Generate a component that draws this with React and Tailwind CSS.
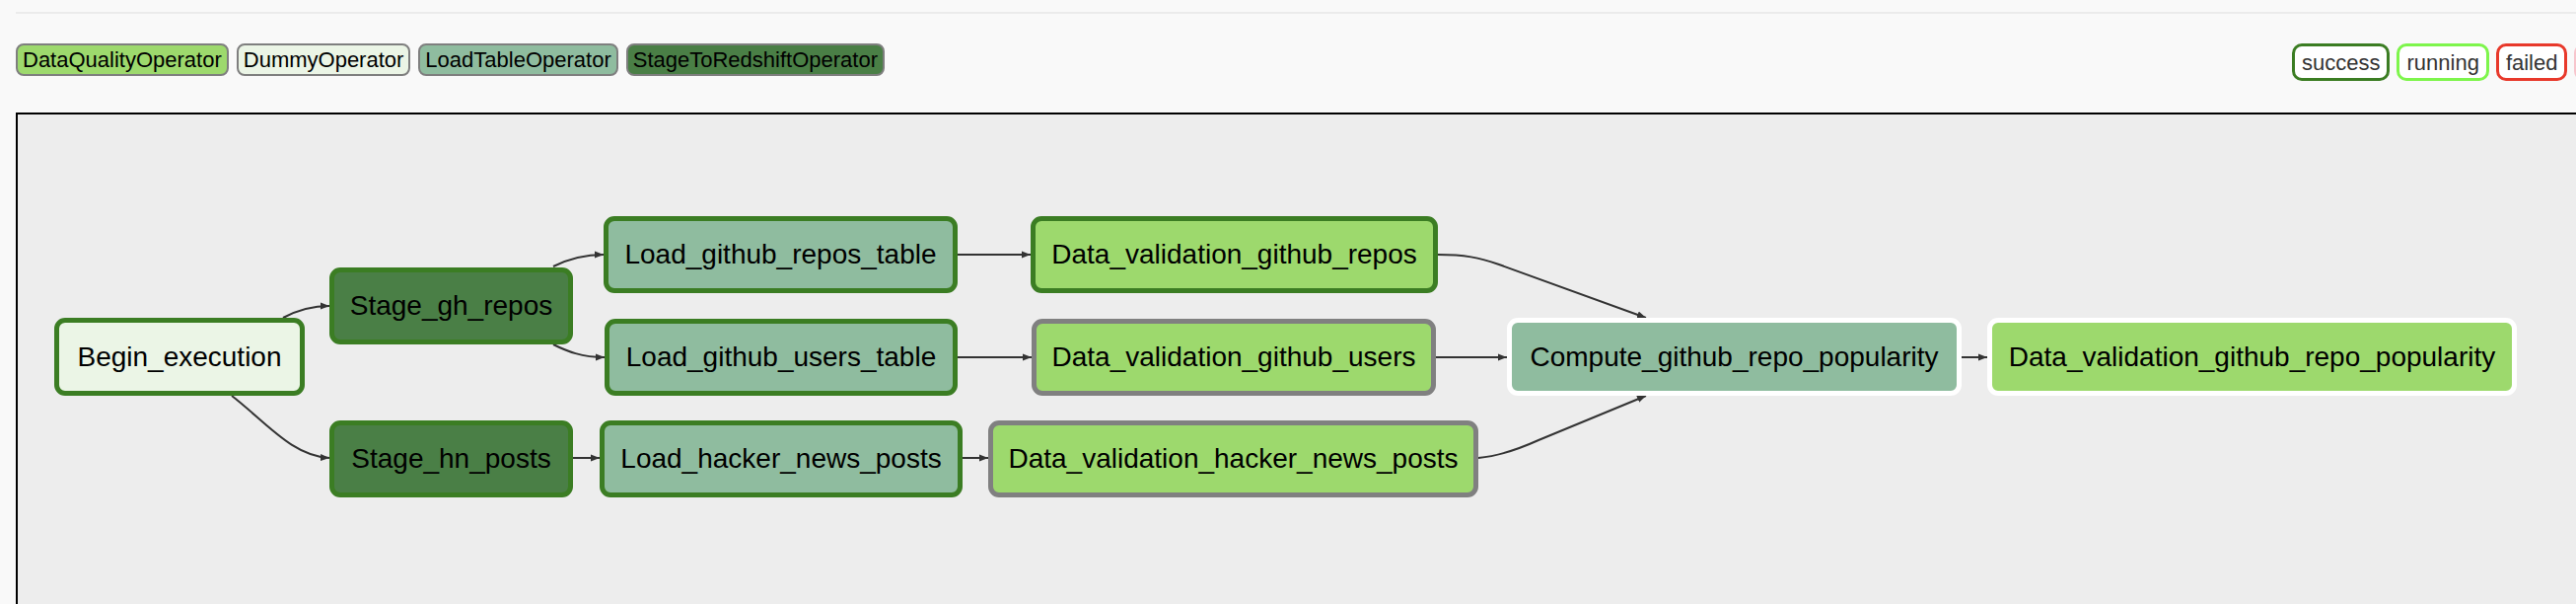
import React from 'react';

// operator fill colours (legend + nodes share them)
const FILLS = {
    dq: 'bg-[#9dd96d]',
    dummy: 'bg-[#ebf5e6]',
    load: 'bg-[#8fbc9f]',
    stage: 'bg-[#4a7f46]'
};

// task state border colours
const STROKES = {
    success: 'border-[#3b7d23]',
    queued: 'border-[#808080]',
    none: 'border-white'
};

const operators = [
    { name: 'DataQualityOperator', fill: 'dq' },
    { name: 'DummyOperator', fill: 'dummy' },
    { name: 'LoadTableOperator', fill: 'load' },
    { name: 'StageToRedshiftOperator', fill: 'stage' }
];

const states = [
    { name: 'success', cls: 'border-[#3b7d23]' },
    { name: 'running', cls: 'border-[#7ef54c]' },
    { name: 'failed', cls: 'border-[#e8392b]' },
    { name: 'skipped', cls: 'border-[#f7c6cd]' },
    { name: 'up_for_reschedule', cls: 'border-[#40e0d0]' },
    { name: 'up_for_retry', cls: 'border-[#ffd700]' },
    { name: 'queued', cls: 'border-[#808080]' },
    { name: 'no_status', cls: 'border-white' }
];

// page coordinates of each task box (outer edge)
const nodes = [
    { label: 'Begin_execution', x: 55, y: 322, w: 254, h: 79, fill: 'dummy', stroke: 'success' },
    { label: 'Stage_gh_repos', x: 334, y: 271, w: 247, h: 78, fill: 'stage', stroke: 'success' },
    { label: 'Stage_hn_posts', x: 334, y: 426, w: 247, h: 78, fill: 'stage', stroke: 'success' },
    { label: 'Load_github_repos_table', x: 612, y: 219, w: 359, h: 78, fill: 'load', stroke: 'success' },
    { label: 'Load_github_users_table', x: 613, y: 323, w: 358, h: 78, fill: 'load', stroke: 'success' },
    { label: 'Load_hacker_news_posts', x: 608, y: 426, w: 368, h: 78, fill: 'load', stroke: 'success' },
    { label: 'Data_validation_github_repos', x: 1045, y: 219, w: 413, h: 78, fill: 'dq', stroke: 'success' },
    { label: 'Data_validation_github_users', x: 1046, y: 323, w: 410, h: 78, fill: 'dq', stroke: 'queued' },
    { label: 'Data_validation_hacker_news_posts', x: 1002, y: 426, w: 497, h: 78, fill: 'dq', stroke: 'queued' },
    { label: 'Compute_github_repo_popularity', x: 1528, y: 322, w: 461, h: 79, fill: 'load', stroke: 'none' },
    { label: 'Data_validation_github_repo_popularity', x: 2015, y: 322, w: 537, h: 79, fill: 'dq', stroke: 'none' }
];

const edges = [
    'M287,322 C300,315 315,310 334,310',
    'M235,401 C270,428 296,462 334,464',
    'M561,270 C575,263 590,258 612,258',
    'M561,349 C575,356 590,362 613,362',
    'M581,464 L608,464',
    'M971,258 L1045,258',
    'M971,362 L1046,362',
    'M976,464 L1002,464',
    'M1458,258 C1485,258 1500,261 1520,268 L1669,322',
    'M1456,362 L1528,362',
    'M1499,464 C1520,462 1540,455 1560,446 L1669,401',
    'M1989,362 L2015,362'
];

// canvas inner origin in page coordinates
const OX = 18;
const OY = 116;

const App = () => {
    return (
        <div className="w-[2612px] h-[612px] overflow-hidden bg-[#f9f9f9] pl-4 font-['Liberation_Sans',Arial,sans-serif]">
            <div className="mt-3 h-[2px] w-[2700px] bg-[#ebebeb]"></div>

            <div className="mt-[30px] flex items-start w-[2800px]">
                <div className="flex gap-2 w-[2308px] shrink-0">
                    {operators.map(op => (
                        <div
                            key={op.name}
                            className={`h-[33px] flex items-center px-[5px] border-2 border-[#7f7f7f] rounded-lg text-[22px] text-black whitespace-nowrap ${FILLS[op.fill]}`}
                        >
                            {op.name}
                        </div>
                    ))}
                </div>
                <div className="flex gap-[7px] shrink-0">
                    {states.map(st => (
                        <div
                            key={st.name}
                            className={`h-[38px] flex items-center px-[7px] border-[3px] rounded-[10px] bg-white text-[22px] text-[#333] whitespace-nowrap ${st.cls}`}
                        >
                            {st.name}
                        </div>
                    ))}
                </div>
            </div>

            <div className="relative mt-8 w-[2700px] h-[520px] border-2 border-black bg-[#ededed]">
                <svg className="absolute left-0 top-0" width="2696" height="516" viewBox={`${OX} ${OY} 2696 516`}>
                    <defs>
                        <marker id="arrow" viewBox="0 0 10 10" refX="10" refY="5" markerWidth="9" markerHeight="9" markerUnits="userSpaceOnUse" orient="auto">
                            <path d="M0,1 L10,5 L0,9 z" fill="#333" />
                        </marker>
                    </defs>
                    {edges.map((d, i) => (
                        <path key={i} d={d} fill="none" stroke="#333" strokeWidth="2" markerEnd="url(#arrow)" />
                    ))}
                </svg>

                {nodes.map(n => (
                    <div
                        key={n.label}
                        className={`absolute flex items-center justify-center border-[5px] rounded-[11px] text-[28px] text-black whitespace-nowrap ${FILLS[n.fill]} ${STROKES[n.stroke]}`}
                        style={{ left: n.x - OX, top: n.y - OY, width: n.w, height: n.h }}
                    >
                        {n.label}
                    </div>
                ))}
            </div>
        </div>
    );
};

export default App;
